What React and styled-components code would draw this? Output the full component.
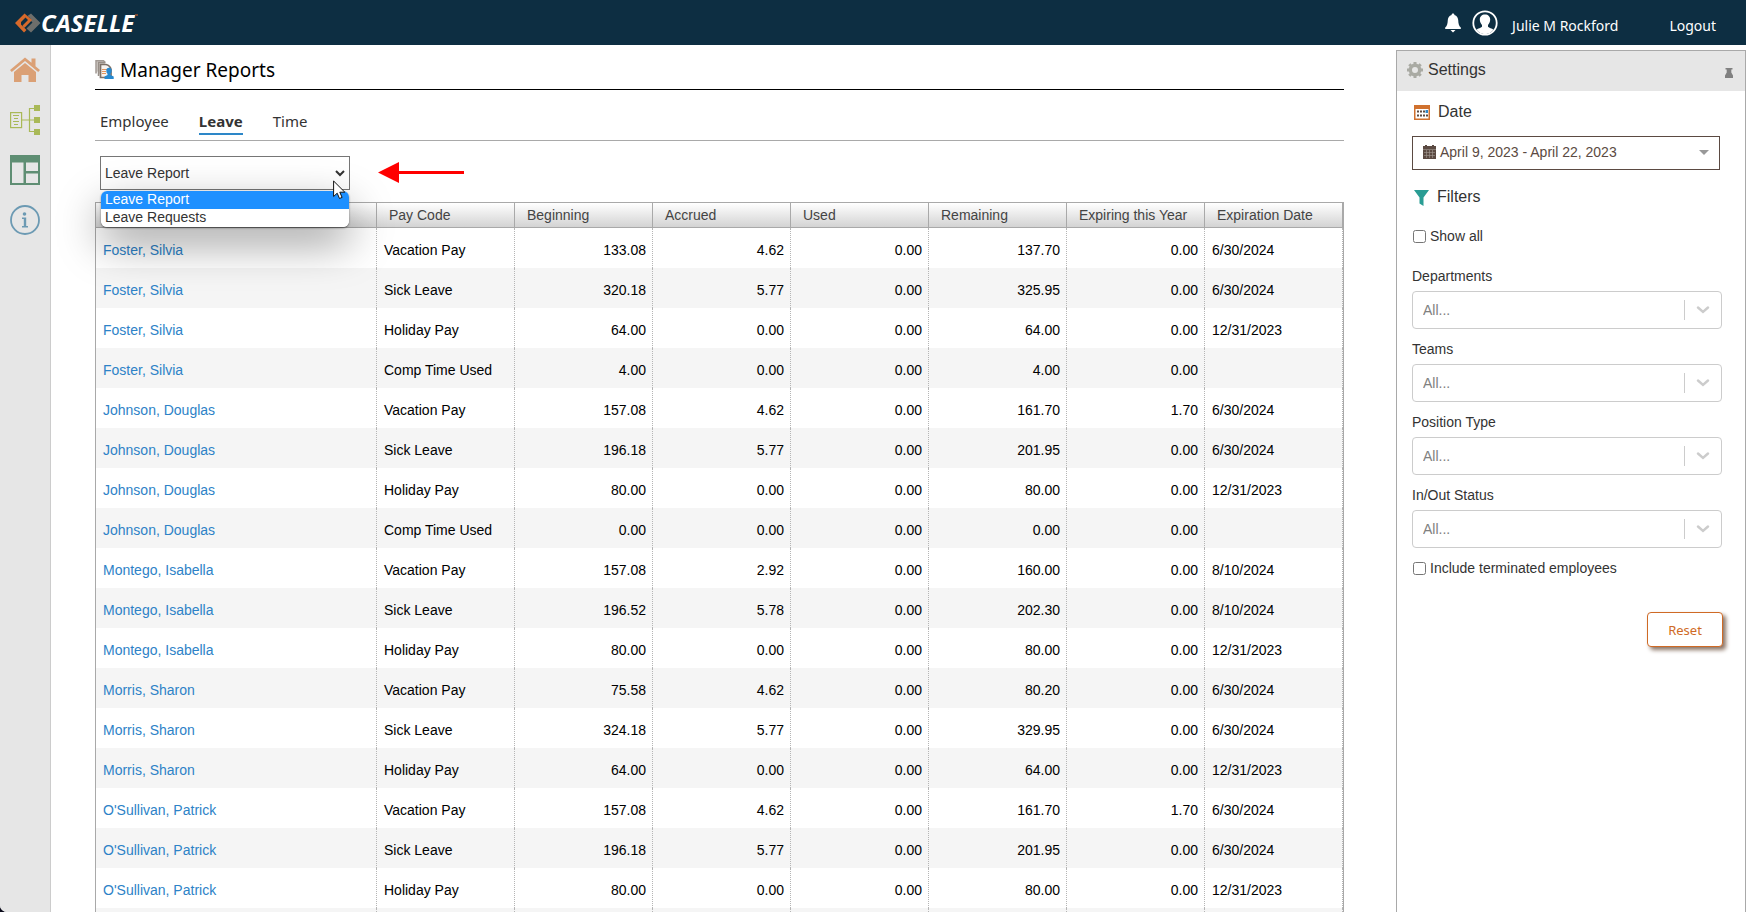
import React, { useState } from 'react';
import styled, { createGlobalStyle } from 'styled-components';

const arial = `"Liberation Sans", Arial, sans-serif`;
const tahoma = `"Noto Sans", Tahoma, sans-serif`;

const GlobalStyle = createGlobalStyle`
    * {
        box-sizing: border-box;
    }

    body {
        margin: 0;
        background: #0b0b1a;
        color: #333;
        font-family: ${arial};
        font-size: 14px;
    }

    button, select, input {
        font: inherit;
        color: inherit;
    }
`;

const Page = styled.div`
    display: flex;
    flex-direction: column;
    height: 100vh;
    overflow: hidden;
    background: white;
    border-bottom-left-radius: 7px;
`;

const Header = styled.header`
    display: flex;
    flex: none;
    align-items: center;
    height: 45px;
    padding: 0 30px 0 15px;
    background: #0d2e42;
    color: white;
    font-family: ${tahoma};
`;

const Logo = styled.div`
    display: flex;
    align-items: center;
    font-family: "Open Sans", sans-serif;
    font-size: 24px;
    font-style: italic;
    font-weight: 700;
    line-height: 45px;
`;

const TradeDot = styled.span`
    width: 3px;
    height: 2px;
    margin: 0 0 16px 1px;
    background: #7d4a33;
`;

const UserBox = styled.div`
    display: flex;
    align-items: center;
    margin-left: auto;
`;

const HeaderButton = styled.button`
    display: flex;
    padding: 0;
    margin-right: ${({ $gap }) => $gap}px;
    background: none;
    border: none;
    cursor: pointer;
`;

const HeaderLink = styled.a`
    margin-left: ${({ $gap }) => $gap}px;
    padding-top: 6px;
    color: white;
    font-size: 14px;
    line-height: 20px;
    text-decoration: none;
`;

const Body = styled.div`
    display: flex;
    flex: 1;
    min-height: 0;
`;

const Sidebar = styled.nav`
    display: flex;
    flex: none;
    flex-direction: column;
    gap: 20px;
    width: 51px;
    padding: 10px;
    background: #e6e6e6;
    border-right: 1px solid #ccc;
`;

const SidebarLink = styled.a`
    display: block;
    height: 30px;
`;

const Main = styled.main`
    flex: 1;
    min-width: 0;
    padding: 0 52px 0 44px;
`;

const TitleBar = styled.div`
    display: flex;
    align-items: center;
    gap: 6px;
    height: 45px;
    padding-top: 5px;
    border-bottom: 1px solid black;
`;

const Title = styled.h1`
    margin: 0;
    color: black;
    font-family: ${tahoma};
    font-size: 19px;
    font-weight: 400;
    line-height: 28px;
`;

const Tabs = styled.div`
    display: flex;
    align-items: flex-end;
    gap: 30px;
    height: 51px;
    padding: 0 5px 5px;
    border-bottom: 1px solid #a9a9a9;
`;

const Tab = styled.button`
    padding: 0;
    background: none;
    border: none;
    border-bottom: 2px solid ${({ $active }) => ($active ? '#2d87c8' : 'transparent')};
    color: #333;
    font-family: ${tahoma};
    font-size: 15px;
    font-weight: ${({ $active }) => ($active ? 700 : 400)};
    line-height: 24px;
    cursor: pointer;
`;

const ReportRow = styled.div`
    display: flex;
    align-items: center;
    gap: 28px;
    padding: 15px 5px 12px;
`;

const ReportPicker = styled.div`
    position: relative;
    width: 250px;
`;

const ReportSelect = styled.select`
    display: block;
    width: 100%;
    height: 34px;
    padding: 0 4px;
    background: white;
    border: 1px solid #767676;
    border-radius: 0;
    appearance: none;
`;

const PickerChevron = styled.svg`
    position: absolute;
    top: 14px;
    right: 5px;
    pointer-events: none;
`;

const Menu = styled.ul`
    position: absolute;
    top: 35px;
    left: 1px;
    z-index: 2;
    width: 248px;
    margin: 0;
    padding: 0;
    overflow: hidden;
    background: white;
    border-radius: 6px;
    box-shadow: 0 16px 44px rgba(0, 0, 0, 0.4), 0 1px 2px rgba(0, 0, 0, 0.5);
    list-style: none;
`;

const MenuItem = styled.li`
    padding: 0 4px 2px;
    background: ${({ $active }) => ($active ? '#1e90ff' : 'white')};
    color: ${({ $active }) => ($active ? 'white' : '#333')};
    line-height: 16px;
`;

const Cursor = styled.svg`
    position: absolute;
    top: 24px;
    left: 233px;
    z-index: 3;
    pointer-events: none;
`;

const Table = styled.table`
    width: 100%;
    border: 1px solid #a9a9a9;
    border-spacing: 0;
    table-layout: fixed;
    color: black;
`;

const NumberCol = styled.col`
    width: 138px;
`;

const HeadCell = styled.th`
    height: 25px;
    padding: 0 0 0 12px;
    background: linear-gradient(white, #d3d3d3);
    border-right: 1px solid #a9a9a9;
    border-bottom: 1px solid #a9a9a9;
    color: #444;
    font-weight: 400;
    text-align: left;
    white-space: nowrap;
`;

const Row = styled.tr`
    &:nth-child(even) {
        background: #f5f5f5;
    }
`;

const Cell = styled.td`
    height: 40px;
    padding: 4px 6px 0 7px;
    border-right: 1px dotted #b5b5b5;
    text-align: ${({ $number }) => ($number ? 'right' : 'left')};
`;

const EmployeeLink = styled.a`
    color: #2d82c7;
    text-decoration: none;
`;

const Panel = styled.aside`
    flex: none;
    width: 350px;
    margin-top: 5px;
    border: 1px solid #a9a9a9;
    border-bottom: none;
`;

const PanelHead = styled.div`
    display: flex;
    align-items: center;
    gap: 5px;
    height: 40px;
    padding: 0 12px 2px 10px;
    background: #e6e6e6;
`;

const PanelTitle = styled.h2`
    flex: 1;
    margin: 0;
    font-size: 16px;
    font-weight: 400;
    line-height: 20px;
`;

const PinButton = styled.button`
    display: flex;
    padding: 6px 0 0;
    background: none;
    border: none;
`;

const PanelBody = styled.div`
    padding: 11px 23px 0 15px;
`;

const SectionTitle = styled.h3`
    display: flex;
    align-items: center;
    gap: 8px;
    margin: 0;
    padding-left: 2px;
    font-size: 16px;
    font-weight: 400;
    line-height: 20px;
`;

const DateButton = styled.button`
    display: flex;
    align-items: center;
    gap: 4px;
    width: calc(100% - 2px);
    height: 34px;
    margin: 14px 0 17px;
    padding: 0 10px 2px;
    background: white;
    border: 1px solid #5b4a42;
    color: #5b4a42;

    span {
        flex: 1;
        text-align: left;
    }
`;

const CheckLabel = styled.label`
    display: flex;
    align-items: center;
    gap: 4px;
    line-height: 20px;
`;

const Check = styled.input`
    width: 13px;
    height: 13px;
    margin: 0 0 0 1px;
`;

const FilterList = styled.div`
    display: flex;
    flex-direction: column;
    gap: 10px;
    padding: 20px 0 10px;
`;

const FilterLabel = styled.label`
    display: block;
    margin-bottom: 5px;
    line-height: 20px;
`;

const FilterBox = styled.div`
    position: relative;
    height: 38px;
`;

const FilterSelect = styled.select`
    display: block;
    width: 100%;
    height: 38px;
    padding: 0 10px;
    background: white;
    border: 1px solid #ccc;
    border-radius: 4px;
    color: #808080;
    appearance: none;
`;

const FilterChevron = styled.div`
    position: absolute;
    top: 9px;
    right: 1px;
    display: flex;
    align-items: center;
    justify-content: center;
    width: 37px;
    height: 20px;
    border-left: 1px solid #ccc;
    pointer-events: none;
`;

const Filters = styled.section`
    & > ${CheckLabel}:first-of-type {
        margin-top: 19px;
    }
`;

const ResetButton = styled.button`
    display: block;
    width: 76px;
    height: 35px;
    margin: 34px -1px 0 auto;
    background: white;
    border: 1px solid #cf6a25;
    border-radius: 4px;
    box-shadow: 3px 3px 4px #8b7465;
    color: #cf6a25;
    font-family: ${tahoma};
    font-size: 13px;
    cursor: pointer;
`;

const reports = ['Leave Report', 'Leave Requests'];
const tabs = ['Employee', 'Leave', 'Time'];
const filters = ['Departments', 'Teams', 'Position Type', 'In/Out Status'];

const columns = ['', 'Pay Code', 'Beginning', 'Accrued', 'Used', 'Remaining', 'Expiring this Year', 'Expiration Date'];

const rows = [
    ['Foster, Silvia', 'Vacation Pay', '133.08', '4.62', '0.00', '137.70', '0.00', '6/30/2024'],
    ['Foster, Silvia', 'Sick Leave', '320.18', '5.77', '0.00', '325.95', '0.00', '6/30/2024'],
    ['Foster, Silvia', 'Holiday Pay', '64.00', '0.00', '0.00', '64.00', '0.00', '12/31/2023'],
    ['Foster, Silvia', 'Comp Time Used', '4.00', '0.00', '0.00', '4.00', '0.00', ''],
    ['Johnson, Douglas', 'Vacation Pay', '157.08', '4.62', '0.00', '161.70', '1.70', '6/30/2024'],
    ['Johnson, Douglas', 'Sick Leave', '196.18', '5.77', '0.00', '201.95', '0.00', '6/30/2024'],
    ['Johnson, Douglas', 'Holiday Pay', '80.00', '0.00', '0.00', '80.00', '0.00', '12/31/2023'],
    ['Johnson, Douglas', 'Comp Time Used', '0.00', '0.00', '0.00', '0.00', '0.00', ''],
    ['Montego, Isabella', 'Vacation Pay', '157.08', '2.92', '0.00', '160.00', '0.00', '8/10/2024'],
    ['Montego, Isabella', 'Sick Leave', '196.52', '5.78', '0.00', '202.30', '0.00', '8/10/2024'],
    ['Montego, Isabella', 'Holiday Pay', '80.00', '0.00', '0.00', '80.00', '0.00', '12/31/2023'],
    ['Morris, Sharon', 'Vacation Pay', '75.58', '4.62', '0.00', '80.20', '0.00', '6/30/2024'],
    ['Morris, Sharon', 'Sick Leave', '324.18', '5.77', '0.00', '329.95', '0.00', '6/30/2024'],
    ['Morris, Sharon', 'Holiday Pay', '64.00', '0.00', '0.00', '64.00', '0.00', '12/31/2023'],
    ["O'Sullivan, Patrick", 'Vacation Pay', '157.08', '4.62', '0.00', '161.70', '1.70', '6/30/2024'],
    ["O'Sullivan, Patrick", 'Sick Leave', '196.18', '5.77', '0.00', '201.95', '0.00', '6/30/2024'],
    ["O'Sullivan, Patrick", 'Holiday Pay', '80.00', '0.00', '0.00', '80.00', '0.00', '12/31/2023'],
    ['', '', '', '', '', '', '', '']
];

const LogoMark = () => (
    <svg width="26" height="20" viewBox="0 0 26 20">
        <path d="M16 0.5 25.5 10 16 19.5 11.5 15.5 17.5 9.5 16 8 9 15 7.5 13.5 15.5 5.5 12.5 3Z" fill="#6d6e6b" />
        <path d="M9.5 0.5 0 10 9 19.5 11.5 17 6 11.5 6 9 10.5 4.5 13 7 7.5 12.5 9.5 14.5 17 7Z" fill="#d7692a" />
    </svg>
);

const BellIcon = () => (
    <svg width="16" height="20" viewBox="0 0 16 20" fill="white">
        <path d="M8 0.5c.9 0 1.4.6 1.4 1.4C12 2.5 13 4.6 13.2 7c.2 4 .6 5.700 2.600 7.500V16H.2v-1.500C2.200 12.700 2.600 11 2.800 7 3 4.600 4 2.500 6.600 1.900 6.600 1.100 7.100.5 8 .5Z" />
        <path d="M5.500 17h5L8 19.500Z" />
    </svg>
);

const AvatarIcon = () => (
    <svg width="26" height="26" viewBox="0 0 26 26">
        <circle cx="13" cy="13" r="11.700" fill="none" stroke="white" strokeWidth="1.800" />
        <path d="M13 4.500c3.200 0 5.200 2.100 5.200 5 0 2.700-1.300 4.300-2.200 5.500v1.800c1 1.200 4 1.500 5.500 3A10.500 10.500 0 0 1 4.500 19.800c1.500-1.500 4.500-1.800 5.500-3V15c-.9-1.200-2.200-2.800-2.200-5.500 0-2.900 2-5 5.200-5Z" fill="white" />
    </svg>
);

const HomeIcon = () => (
    <svg width="30" height="30" viewBox="0 0 30 30" fill="#dba075">
        <path d="M15 2.500 0 15l1.800 2L15 6l13.200 11 1.800-2-4.500-3.800V3.500h-4v4.300Z" />
        <path d="M15 8 4 17v10h7.500v-7h7v7H26V17Z" />
    </svg>
);

const FlowIcon = () => (
    <svg width="30" height="30" viewBox="0 0 30 30" fill="none" stroke="#a9b958">
        <rect x="0.600" y="7.600" width="11" height="15" strokeWidth="1.200" />
        <path d="M3 10.500h6M4 13.500h4M3 16.500h6M4 19.500h4" />
        <path d="M12 15h12M24 3.500h-4.500v23H24" strokeWidth="1.200" />
        <path d="M24 0h6v6h-6ZM24 12h6v6h-6ZM24 24h6v6h-6Z" fill="#a9b958" stroke="none" />
    </svg>
);

const LayoutIcon = () => (
    <svg width="30" height="30" viewBox="0 0 30 30">
        <path d="M0 0h30v30H0ZM2 7.500V28h11.500V7.500ZM16 7.500v8.500h12V7.500ZM16 18.500V28h12v-9.500Z" fill="#5f8e73" fillRule="evenodd" />
    </svg>
);

const InfoIcon = () => (
    <svg width="30" height="30" viewBox="0 0 30 30">
        <circle cx="15" cy="15" r="14" fill="none" stroke="#6c9ab3" strokeWidth="1.800" />
        <circle cx="14.500" cy="9" r="1.800" fill="#6c9ab3" />
        <path d="M12 12.500h4.200v8.500h1.800v1.500h-6V21h1.800v-7H12Z" fill="#6c9ab3" />
    </svg>
);

const ReportsIcon = () => (
    <svg width="19" height="19" viewBox="0 0 19 19">
        <path d="M1 13.500V.8h7.500l1.500 1.500" fill="#d5cfca" stroke="#a39b95" strokeWidth="1.500" />
        <path d="M3.500 16V2.600h7" fill="#d5cfca" stroke="#978e87" strokeWidth="1.500" />
        <path d="M5.500 4.500h5.500c2.500.5 4.500 2.500 5 5V17.500H5.500Z" fill="#f7f3ef" stroke="#7c7067" strokeWidth="1.700" />
        <path d="M7 9.500h5M7 11.500h4M7 13.500h4" stroke="#e2955f" />
        <path d="M14 7.800c1.800 0 2.700 1.200 2.700 3 0 1.500-.7 2.500-1.200 3v1.300l3.200 1.400V19H9.500v-2.500l3-1.400v-1.300c-.5-.5-1.200-1.500-1.200-3 0-1.800.9-3 2.700-3Z" fill="#2688cf" />
    </svg>
);

const RedArrow = () => (
    <svg width="88" height="22" viewBox="0 0 88 22" fill="red">
        <path d="M0 9 21-1.500V7.500h65v3H21v9Z" transform="translate(0 1.500)" />
    </svg>
);

const GearIcon = () => (
    <svg width="16" height="16" viewBox="0 0 16 16" fill="none" stroke="#a9aaa3">
        <circle cx="8" cy="8" r="4.700" strokeWidth="3.400" />
        <path d="M8 0v3M8 13v3M0 8h3M13 8h3M2.300 2.300l2.200 2.200M11.500 11.500l2.200 2.200M13.700 2.300l-2.200 2.200M4.500 11.500l-2.200 2.200" strokeWidth="3" />
    </svg>
);

const PinIcon = () => (
    <svg width="8" height="10" viewBox="0 0 8 10" fill="#808080">
        <path d="M.5 0h7v1.500H6.300V4.500L8 7.500V10H0V7.500L1.700 4.500V1.500H.5Z" />
    </svg>
);

const CalendarIcon = () => (
    <svg width="16" height="15" viewBox="0 0 16 15">
        <path d="M0 0h16v15H0Z" fill="#d0712e" />
        <path d="M1.500 4h13v9.500h-13Z" fill="white" />
        <path d="M3 5.500h2v2H3ZM6 5.500h2v2H6ZM9 5.500h2v2H9ZM3 9.500h2v2H3ZM6 9.500h2v2H6ZM9 9.500h2v2H9ZM12 9.500h2v2h-2Z" fill="#5b4a42" />
        <path d="M11.500 5h2.500v3h-2.500Z" fill="#2d87c8" />
    </svg>
);

const DateIcon = () => (
    <svg width="13" height="14" viewBox="0 0 13 14">
        <path d="M0 1h2V0h2v1h5V0h2v1h2v13H0Z" fill="#5b4a42" />
        <path d="M0 4.500h13M1 7.500h11M1 10.500h11M3.500 5v8M6.500 5v8M9.500 5v8" stroke="#a49a94" strokeWidth="0.600" />
    </svg>
);

const FunnelIcon = () => (
    <svg width="15" height="17" viewBox="0 0 15 17">
        <path d="M0 1h15L9.500 8.500V17L5.500 14.500v-6Z" fill="#2a9d94" />
    </svg>
);

const FilterField = ({ name }) => {
    const id = name.replace(/\W/g, '');

    return (
        <div>
            <FilterLabel htmlFor={id}>{name}</FilterLabel>
            <FilterBox>
                <FilterSelect id={id}>
                    <option>All...</option>
                </FilterSelect>
                <FilterChevron>
                    <svg width="14" height="8" viewBox="0 0 14 8" fill="none" stroke="#ccc" strokeWidth="2.400" strokeLinecap="round">
                        <path d="M2 1.500l5 4.500 5-4.500" />
                    </svg>
                </FilterChevron>
            </FilterBox>
        </div>
    );
};

const LeaveTable = () => (
    <Table>
        <colgroup>
            <col />
            {columns.slice(1).map((name) => <NumberCol key={name} />)}
        </colgroup>
        <thead>
            <tr>
                {columns.map((name) => <HeadCell key={name}>{name}</HeadCell>)}
            </tr>
        </thead>
        <tbody>
            {rows.map(([employee, ...values], index) => (
                <Row key={index}>
                    <Cell>{employee && <EmployeeLink href="#employee">{employee}</EmployeeLink>}</Cell>
                    {values.map((value, i) => (
                        <Cell key={i} $number={i > 0 && i < 6}>{value}</Cell>
                    ))}
                </Row>
            ))}
        </tbody>
    </Table>
);

export default () => {
    const [tab, setTab] = useState('Leave');
    const [report, setReport] = useState(reports[0]);

    return (
        <>
            <GlobalStyle />
            <Page>
                <Header>
                    <Logo>
                        <LogoMark />
                        CASELLE
                        <TradeDot />
                    </Logo>
                    <UserBox>
                        <HeaderButton $gap={11} aria-label="Notifications"><BellIcon /></HeaderButton>
                        <HeaderButton $gap={0} aria-label="Profile"><AvatarIcon /></HeaderButton>
                        <HeaderLink $gap={14} href="#profile">Julie M Rockford</HeaderLink>
                        <HeaderLink $gap={51} href="#logout">Logout</HeaderLink>
                    </UserBox>
                </Header>
                <Body>
                    <Sidebar>
                        <SidebarLink href="#home" aria-label="Home"><HomeIcon /></SidebarLink>
                        <SidebarLink href="#flow" aria-label="Workflow"><FlowIcon /></SidebarLink>
                        <SidebarLink href="#layout" aria-label="Dashboard"><LayoutIcon /></SidebarLink>
                        <SidebarLink href="#info" aria-label="Information"><InfoIcon /></SidebarLink>
                    </Sidebar>
                    <Main>
                        <TitleBar>
                            <ReportsIcon />
                            <Title>Manager Reports</Title>
                        </TitleBar>
                        <Tabs>
                            {tabs.map((name) => (
                                <Tab key={name} $active={name === tab} onClick={() => setTab(name)}>{name}</Tab>
                            ))}
                        </Tabs>
                        <ReportRow>
                            <ReportPicker>
                                <ReportSelect aria-label="Report" value={report} onChange={(e) => setReport(e.target.value)}>
                                    {reports.map((name) => <option key={name}>{name}</option>)}
                                </ReportSelect>
                                <PickerChevron width="10" height="7" viewBox="0 0 10 7" fill="none" stroke="#333" strokeWidth="2">
                                    <path d="M1 1l4 4 4-4" />
                                </PickerChevron>
                                <Menu role="listbox">
                                    {reports.map((name) => (
                                        <MenuItem key={name} role="option" $active={name === report} onClick={() => setReport(name)}>
                                            {name}
                                        </MenuItem>
                                    ))}
                                </Menu>
                                <Cursor width="13" height="20" viewBox="0 0 13 20">
                                    <path d="M.6 1v15.500l3.600-3.300 2.300 5.300 2.600-1.100-2.300-5.200h5Z" fill="white" stroke="#111" />
                                </Cursor>
                            </ReportPicker>
                            <RedArrow />
                        </ReportRow>
                        <LeaveTable />
                    </Main>
                    <Panel>
                        <PanelHead>
                            <GearIcon />
                            <PanelTitle>Settings</PanelTitle>
                            <PinButton aria-label="Pin settings"><PinIcon /></PinButton>
                        </PanelHead>
                        <PanelBody>
                            <SectionTitle><CalendarIcon />Date</SectionTitle>
                            <DateButton>
                                <DateIcon />
                                <span>April 9, 2023 - April 22, 2023</span>
                                <svg width="10" height="5" viewBox="0 0 10 5" fill="#999">
                                    <path d="M0 0h10L5 5Z" />
                                </svg>
                            </DateButton>
                            <Filters>
                                <SectionTitle><FunnelIcon />Filters</SectionTitle>
                                <CheckLabel><Check type="checkbox" />Show all</CheckLabel>
                                <FilterList>
                                    {filters.map((name) => <FilterField key={name} name={name} />)}
                                </FilterList>
                                <CheckLabel><Check type="checkbox" />Include terminated employees</CheckLabel>
                            </Filters>
                            <ResetButton>Reset</ResetButton>
                        </PanelBody>
                    </Panel>
                </Body>
            </Page>
        </>
    );
};
